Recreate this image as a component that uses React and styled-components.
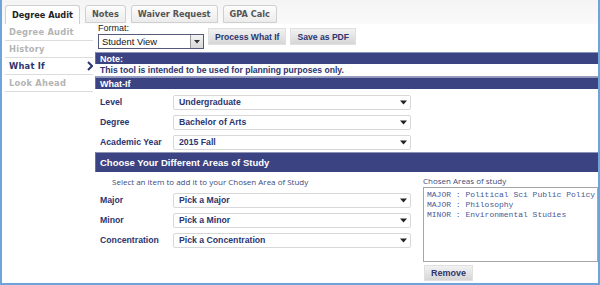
import React from 'react'
import styled, { createGlobalStyle } from 'styled-components'

const Navy = '#2c3570'
const Bar = '#3c4382'
const Frame = '#6fa3dc'

const GlobalStyle = createGlobalStyle`
  html, body {
    margin: 0;
    padding: 0;
    background: #fff;
  }
  * {
    box-sizing: border-box;
  }
`

const Page = styled.div`
  width: 600px;
  height: 285px;
  border-left: 2px solid ${Frame};
  border-right: 2px solid ${Frame};
  border-bottom: 2px solid ${Frame};
  font-family: "Liberation Sans", Arial, sans-serif;
  display: flex;
  flex-direction: column;
  overflow: hidden;
`

const TabBar = styled.div`
  height: 24px;
  background: linear-gradient(#f4f4f4, #fafafa);
  display: flex;
  align-items: flex-end;
  padding: 0 0 0 3px;
  gap: 5px;
`

const Tab = styled.div`
  height: ${p => (p.$active ? '19px' : '18px')};
  margin-bottom: ${p => (p.$active ? '0' : '1px')};
  padding: 0 6px;
  border: 1px solid #cfcfcf;
  border-bottom: ${p => (p.$active ? 'none' : '1px solid #cfcfcf')};
  border-radius: 3px 3px 0 0;
  background: ${p => (p.$active ? '#fff' : 'linear-gradient(#fdfdfd, #ebebeb)')};
  color: ${p => (p.$active ? '#222' : '#555')};
  font-family: "DejaVu Sans", Verdana, sans-serif;
  font-weight: bold;
  font-size: 8.2px;
  display: flex;
  align-items: center;
`

const Body = styled.div`
  flex: 1;
  display: flex;
`

const Nav = styled.nav`
  width: 93px;
  padding: 0 0 0 3px;
  flex: none;
`

const NavItem = styled.div`
  height: 17px;
  border-bottom: 1px solid #dcdcdc;
  margin-right: 2px;
  padding: 0 0 0 4px;
  display: flex;
  align-items: center;
  justify-content: space-between;
  font-family: "DejaVu Sans", Verdana, sans-serif;
  font-weight: bold;
  font-size: 8.3px;
  letter-spacing: 0.25px;
  color: ${p => (p.$active ? Navy : '#b4b4b4')};
`

const Main = styled.main`
  flex: 1;
  display: flex;
  flex-direction: column;
`

const Toolbar = styled.div`
  display: flex;
  align-items: flex-start;
  padding: 0 0 0 3px;
  height: 28px;
`

const FormatGroup = styled.div`
  display: flex;
  flex-direction: column;
  width: 106px;
`

const FormatLabel = styled.div`
  font-size: 9px;
  color: #222;
  height: 9px;
  line-height: 9px;
`

const FormatSelect = styled.div`
  height: 15px;
  margin-top: 1px;
  border: 1px solid #555a7a;
  display: flex;
  align-items: center;
  font-size: 9.4px;
  color: #111;
  padding-left: 3px;
  justify-content: space-between;
`

const DropButton = styled.div`
  width: 13px;
  height: 13px;
  background: linear-gradient(#f4f4f4, #d8d8d8);
  border-left: 1px solid #999;
  display: flex;
  align-items: center;
  justify-content: center;
`

const Button = styled.div`
  height: 17px;
  margin: 4px 0 0 4px;
  padding: 0 6px;
  background: linear-gradient(#f2f2f2, #d6d6d6);
  border: 1px solid #e0e0e0;
  color: ${Navy};
  font-size: 8.6px;
  font-weight: bold;
  display: flex;
  align-items: center;
`

const SectionBar = styled.div`
  height: ${p => p.$tall ? '20px' : '12px'};
  background: ${Bar};
  color: #fff;
  font-weight: bold;
  font-size: ${p => p.$tall ? '9.5px' : '9px'};
  padding: 0 0 0 4px;
  display: flex;
  align-items: center;
  border-top: 1px solid #8e93b8;
  border-left: 1px solid #6a70a0;
`

const NoteText = styled.div`
  height: 13px;
  font-size: 8.6px;
  font-weight: bold;
  color: ${Navy};
  padding: 0 0 0 5px;
  display: flex;
  align-items: center;
  border-bottom: 1px solid #9aa0c4;
`

const Rows = styled.div`
  padding: 6px 0 0 5px;
  display: flex;
  flex-direction: column;
  gap: 6px;
  height: ${p => p.$h || 'auto'};
`

const Row = styled.div`
  display: flex;
  align-items: center;
  height: 14px;
`

const Label = styled.div`
  width: 73px;
  font-size: 8.7px;
  font-weight: bold;
  color: ${Navy};
`

const Select = styled.div`
  width: 238px;
  height: 15px;
  border: 1px solid #d8d8d8;
  border-radius: 2px;
  background: #fff;
  padding: 0 0 0 5px;
  display: flex;
  align-items: center;
  justify-content: space-between;
  font-size: 8.7px;
  font-weight: bold;
  color: ${Navy};
`

const Arrow = styled.svg`
  margin-right: 3px;
`

const Split = styled.div`
  display: flex;
`

const LeftCol = styled.div`
  width: 328px;
`

const Hint = styled.div`
  font-family: "Open Sans", sans-serif;
  font-size: 8px;
  color: #3c4a7c;
  padding: 4px 0 0 17px;
  height: 15px;
`

const RightCol = styled.div`
  flex: 1;
  display: flex;
  flex-direction: column;
  padding: 3px 0 0 0;
`

const ChosenLabel = styled.div`
  font-family: "Open Sans", sans-serif;
  font-size: 8px;
  color: #3c4a7c;
  height: 12px;
`

const ChosenBox = styled.div`
  height: 75px;
  border: 1px solid #a6a6a6;
  padding: 2px 0 0 3px;
  font-family: "Liberation Mono", "Courier New", monospace;
  font-size: 8px;
  line-height: 10px;
  color: #4a5a98;
  white-space: pre;
  overflow: hidden;
`

const RemoveButton = styled(Button)`
  align-self: flex-start;
  margin: 3px 0 0 1px;
  height: 16px;
  padding: 0 6px;
  font-size: 9px;
`

const Caret = ({ size = 7 }) => (
  <Arrow width={size} height={5} viewBox="0 0 7 5">
    <path d="M0 0.5h7L3.5 4.5z" fill="#222" />
  </Arrow>
)

const Chevron = () => (
  <svg width="6" height="10" viewBox="0 0 6 10">
    <path d="M1 1l4 4-4 4" fill="none" stroke={Navy} strokeWidth="2" />
  </svg>
)

const Field = ({ label, value }) => (
  <Row>
    <Label>{label}</Label>
    <Select>
      {value}
      <Caret />
    </Select>
  </Row>
)

export default function App() {
  return (
    <>
      <GlobalStyle />
      <Page>
        <TabBar>
          <Tab $active>Degree Audit</Tab>
          <Tab>Notes</Tab>
          <Tab>Waiver Request</Tab>
          <Tab>GPA Calc</Tab>
        </TabBar>
        <Body>
          <Nav>
            <NavItem>Degree Audit</NavItem>
            <NavItem>History</NavItem>
            <NavItem $active>
              What If
              <Chevron />
            </NavItem>
            <NavItem>Look Ahead</NavItem>
          </Nav>
          <Main>
            <Toolbar>
              <FormatGroup>
                <FormatLabel>Format:</FormatLabel>
                <FormatSelect>
                  Student View
                  <DropButton>
                    <svg width="6" height="4" viewBox="0 0 6 4">
                      <path d="M0 0h6L3 3.5z" fill="#333" />
                    </svg>
                  </DropButton>
                </FormatSelect>
              </FormatGroup>
              <Button>Process What If</Button>
              <Button>Save as PDF</Button>
            </Toolbar>
            <SectionBar>Note:</SectionBar>
            <NoteText>This tool is intended to be used for planning purposes only.</NoteText>
            <SectionBar>What-If</SectionBar>
            <Rows $h="63px">
              <Field label="Level" value="Undergraduate" />
              <Field label="Degree" value="Bachelor of Arts" />
              <Field label="Academic Year" value="2015 Fall" />
            </Rows>
            <SectionBar $tall>Choose Your Different Areas of Study</SectionBar>
            <Split>
              <LeftCol>
                <Hint>Select an item to add it to your Chosen Area of Study</Hint>
                <Rows>
                  <Field label="Major" value="Pick a Major" />
                  <Field label="Minor" value="Pick a Minor" />
                  <Field label="Concentration" value="Pick a Concentration" />
                </Rows>
              </LeftCol>
              <RightCol>
                <ChosenLabel>Chosen Areas of study</ChosenLabel>
                <ChosenBox>{'MAJOR : Political Sci Public Policy\nMAJOR : Philosophy\nMINOR : Environmental Studies'}</ChosenBox>
                <RemoveButton>Remove</RemoveButton>
              </RightCol>
            </Split>
          </Main>
        </Body>
      </Page>
    </>
  )
}
